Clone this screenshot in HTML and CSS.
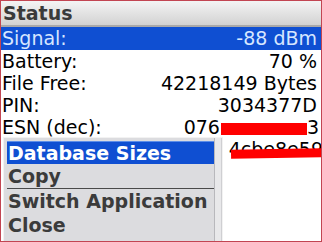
FILE: index.html
```html
<!DOCTYPE html>
<html lang="en">
<head>
    <meta charset="UTF-8">
    <title>Status</title>
    <link rel="stylesheet" href="styles.css">
</head>
<body>

    <div class="screen">
        <div class="title-bar">Status</div>

        <div class="list">
            <div class="row selected"><span>Signal:</span><span>-88 dBm</span></div>
            <div class="row"><span>Battery:</span><span>70 %</span></div>
            <div class="row"><span>File Free:</span><span>42218149 Bytes</span></div>
            <div class="row"><span>PIN:</span><span>3034377D</span></div>
            <div class="row"><span>ESN (dec):</span><span class="esn">076<span class="redact"></span>3</span></div>
            <div class="row"><span></span><span class="scribbled">4cbe8e59<span class="scribble"></span></span></div>
        </div>

        <!-- popup menu -->
        <div class="menu">
            <div class="menu-items">
                <div class="menu-item active">Database Sizes</div>
                <div class="menu-item divider">Copy</div>
                <div class="menu-item">Switch Application</div>
                <div class="menu-item">Close</div>
            </div>
            <div class="menu-scroll"></div>
        </div>
    </div>

</body>
</html>
```

FILE: styles.css
```css
body {
    margin: 0;
    padding: 0;
    background-color: white;
    font-family: 'DejaVu Sans', 'Liberation Sans', sans-serif;
}

.screen {
    position: relative;
    width: 322px;
    height: 242px;
    box-sizing: border-box;
    border: 1px solid #c24552;
    overflow: hidden;
    background-color: white;
}

.title-bar {
    height: 24px;
    padding-left: 2px;
    font-size: 19px;
    font-weight: bold;
    line-height: 24px;
    color: #3a3a3a;
    background: linear-gradient(#f4f4f4, #d2d2d2);
    border-bottom: 2px solid #a9a9a9;
}

.list {
    display: flex;
    flex-direction: column;
}

.row {
    display: flex;
    justify-content: space-between;
    height: 22px;
    padding: 0 4px 0 1px;
    font-size: 19px;
    line-height: 22px;
    color: black;
    white-space: nowrap;
}

.row.selected {
    height: 23px;
    line-height: 23px;
    background-color: #0f4fd2;
    color: #d6e6ff;
}

.esn {
    margin-right: -2px;
}

.redact {
    display: inline-block;
    width: 86px;
    height: 12px;
    margin-left: 1px;
    background-color: #ff0000;
    vertical-align: -1px;
}

.scribbled {
    position: relative;
    margin-right: -6px;
}

.scribble {
    position: absolute;
    left: 2px;
    right: -4px;
    top: 11px;
    height: 9px;
    background-color: #ff0000;
    transform: rotate(-1deg);
}

.menu {
    position: absolute;
    left: 2px;
    top: 136px;
    width: 220px;
    height: 110px;
    display: flex;
    background-color: #dcdcdf;
    border: 1px solid #f2f2f2;
    box-sizing: border-box;
}

.menu-items {
    flex: 1;
    padding: 3px 0 0 3px;
    border-right: 1px solid #b8b8bc;
}

.menu-scroll {
    width: 6px;
    background-color: #e8e8ea;
    border-right: 1px solid #cfcfd2;
}

.menu-item {
    height: 24px;
    padding-left: 1px;
    font-size: 19px;
    font-weight: bold;
    line-height: 24px;
    color: #3b3b3b;
    white-space: nowrap;
}

.menu-item.active {
    height: 22px;
    line-height: 22px;
    background-color: #0f4fd2;
    color: white;
    border-top: 1px solid #5d8ee8;
}

.menu-item.divider {
    border-bottom: 1px solid #4a4a4a;
}
```
